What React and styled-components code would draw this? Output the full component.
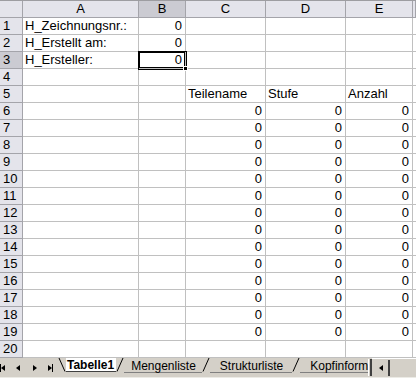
import styled, { createGlobalStyle } from "styled-components"

const Global = createGlobalStyle`
    html, body {
        margin: 0;
        padding: 0;
        background: #ffffff;
    }
    body {
        font-family: "Liberation Sans", Arial, sans-serif;
        font-size: 13px;
        color: #000;
    }
`;

const Window = styled.div`
    width: 416px;
    height: 378px;
    display: flex;
    flex-direction: column;
    overflow: hidden;
    background: #fff;
`;

const Grid = styled.div`
    display: grid;
    grid-template-columns: 23px 116px 47px 80px 80px 67px 3px;
    grid-auto-rows: 17px;
    border-top: 1px solid #9d9da1;
`;

const Head = styled.div`
    box-sizing: border-box;
    display: flex;
    align-items: center;
    justify-content: center;
    background: ${p => (p.$active ? "#cbcbd2" : "#e4e4eb")};
    border-right: 1px solid #a4a4aa;
    border-bottom: 1px solid #a4a4aa;
    font-size: 13px;
    line-height: 16px;
`;

const RowHead = styled(Head)`
    justify-content: flex-start;
    padding-left: 3px;
`;

const Cell = styled.div`
    box-sizing: border-box;
    position: relative;
    display: flex;
    align-items: center;
    justify-content: ${p => (p.$num ? "flex-end" : "flex-start")};
    padding: 0 3px 0 2px;
    border-right: 1px solid #c0c0c0;
    border-bottom: 1px solid #c0c0c0;
    white-space: nowrap;
    font-size: 13px;
    line-height: 16px;
    box-shadow: ${p => (p.$selected ? "0 0 0 1px #000, inset 0 0 0 1px #000" : "none")};
    z-index: ${p => (p.$selected ? 2 : 0)};
`;

const Handle = styled.span`
    position: absolute;
    right: -3px;
    bottom: -3px;
    width: 5px;
    height: 5px;
    background: #000;
    border: 1px solid #fff;
    box-sizing: border-box;
`;

const TabBar = styled.div`
    height: 21px;
    display: flex;
    align-items: flex-start;
    background: #d4d0c8;
    border-bottom: 2px solid #ecebe6;
    font-size: 12px;
`;

const Nav = styled.div`
    width: 58px;
    height: 19px;
    display: flex;
    align-items: center;
    justify-content: space-between;
    padding: 0 4px 0 0;
    box-sizing: border-box;
`;

const Tabs = styled.div`
    flex: 1;
    height: 19px;
    display: flex;
    overflow: hidden;
`;

const Tab = styled.div`
    position: relative;
    height: 13px;
    display: flex;
    align-items: center;
    padding: 0 ${p => p.$right}px 0 ${p => p.$left}px;
    white-space: nowrap;
    background: ${p => (p.$active ? "#fff" : "transparent")};
    font-weight: ${p => (p.$active ? "bold" : "normal")};
    font-size: 12px;
    margin-top: ${p => (p.$active ? "0" : "1px")};
    border-bottom: 1px solid ${p => (p.$active ? "#404040" : "#808080")};
`;

const Slant = styled.svg`
    flex: none;
    display: block;
`;

const Splitter = styled.div`
    width: 4px;
    height: 17px;
    margin-top: 1px;
    border-left: 1px solid #fff;
    border-right: 2px solid #404040;
    box-sizing: border-box;
`;

const ScrollBox = styled.div`
    flex: 1;
    max-width: 44px;
    height: 18px;
    display: flex;
    align-items: center;
    padding-left: 4px;
    box-sizing: border-box;
    border-top: 1px solid #fff;
`;

const ScrollBtn = styled.div`
    width: 14px;
    height: 16px;
    display: flex;
    align-items: center;
    justify-content: center;
    border-right: 2px solid #404040;
    box-sizing: border-box;
`;

function Arrow({ dir, bar }) {
    const left = dir === "left";
    return (
        <svg width="8" height="8" viewBox="0 0 8 8">
            {left
                ? <polygon points="5,1 1,4 5,7" fill="#000" />
                : <polygon points="2,1 6,4 2,7" fill="#000" />}
            {bar && <rect x={left ? 0 : 6} y="0" width="1" height="8" fill="#000" />}
        </svg>
    );
}

function Edge({ dir }) {
    // "in" draws \ , "out" draws /
    return (
        <Slant width="8" height="14" viewBox="0 0 8 14">
            {dir === "in"
                ? <line x1="1" y1="0" x2="7" y2="13.5" stroke="#000" strokeWidth="1" />
                : <line x1="7" y1="0" x2="1" y2="13.5" stroke="#000" strokeWidth="1" />}
        </Slant>
    );
}

const cols = ["A", "B", "C", "D", "E"];

const rows = Array.from({ length: 20 }, (_, i) => {
    const n = i + 1;
    if (n === 1) return ["H_Zeichnungsnr.:", "0", "", "", ""];
    if (n === 2) return ["H_Erstellt am:", "0", "", "", ""];
    if (n === 3) return ["H_Ersteller:", "0", "", "", ""];
    if (n === 5) return ["", "", "Teilename", "Stufe", "Anzahl"];
    if (n >= 6 && n <= 19) return ["", "", "0", "0", "0"];
    return ["", "", "", "", ""];
});

export default function App() {
    return (
        <Window>
            <Global />
            <Grid>
                <Head />
                {cols.map(c => (
                    <Head key={c} $active={c === "B"}>{c}</Head>
                ))}
                <Head />
                {rows.map((r, i) => [
                    <RowHead key={"h" + i} $active={i === 2}>{i + 1}</RowHead>,
                    ...r.map((v, j) => {
                        const num = v === "0";
                        const sel = i === 2 && j === 1;
                        return (
                            <Cell key={i + "-" + j} $num={num} $selected={sel}>
                                {v}
                                {sel && <Handle />}
                            </Cell>
                        );
                    }),
                    <Cell key={"r" + i} />,
                ])}
            </Grid>
            <TabBar>
                <Nav>
                    <Arrow dir="left" bar />
                    <Arrow dir="left" />
                    <Arrow dir="right" />
                    <Arrow dir="right" bar />
                </Nav>
                <Tabs>
                    <Edge dir="in" />
                    <Tab $active $left={1} $right={2}>Tabelle1</Tab>
                    <Edge dir="out" />
                    <Tab $left={7} $right={6}>Mengenliste</Tab>
                    <Edge dir="out" />
                    <Tab $left={10} $right={9}>Strukturliste</Tab>
                    <Edge dir="out" />
                    <Tab $left={10} $right={4}>Kopfinformationen</Tab>
                </Tabs>
                <Splitter />
                <ScrollBox>
                    <ScrollBtn>
                        <Arrow dir="left" />
                    </ScrollBtn>
                </ScrollBox>
            </TabBar>
        </Window>
    );
}
